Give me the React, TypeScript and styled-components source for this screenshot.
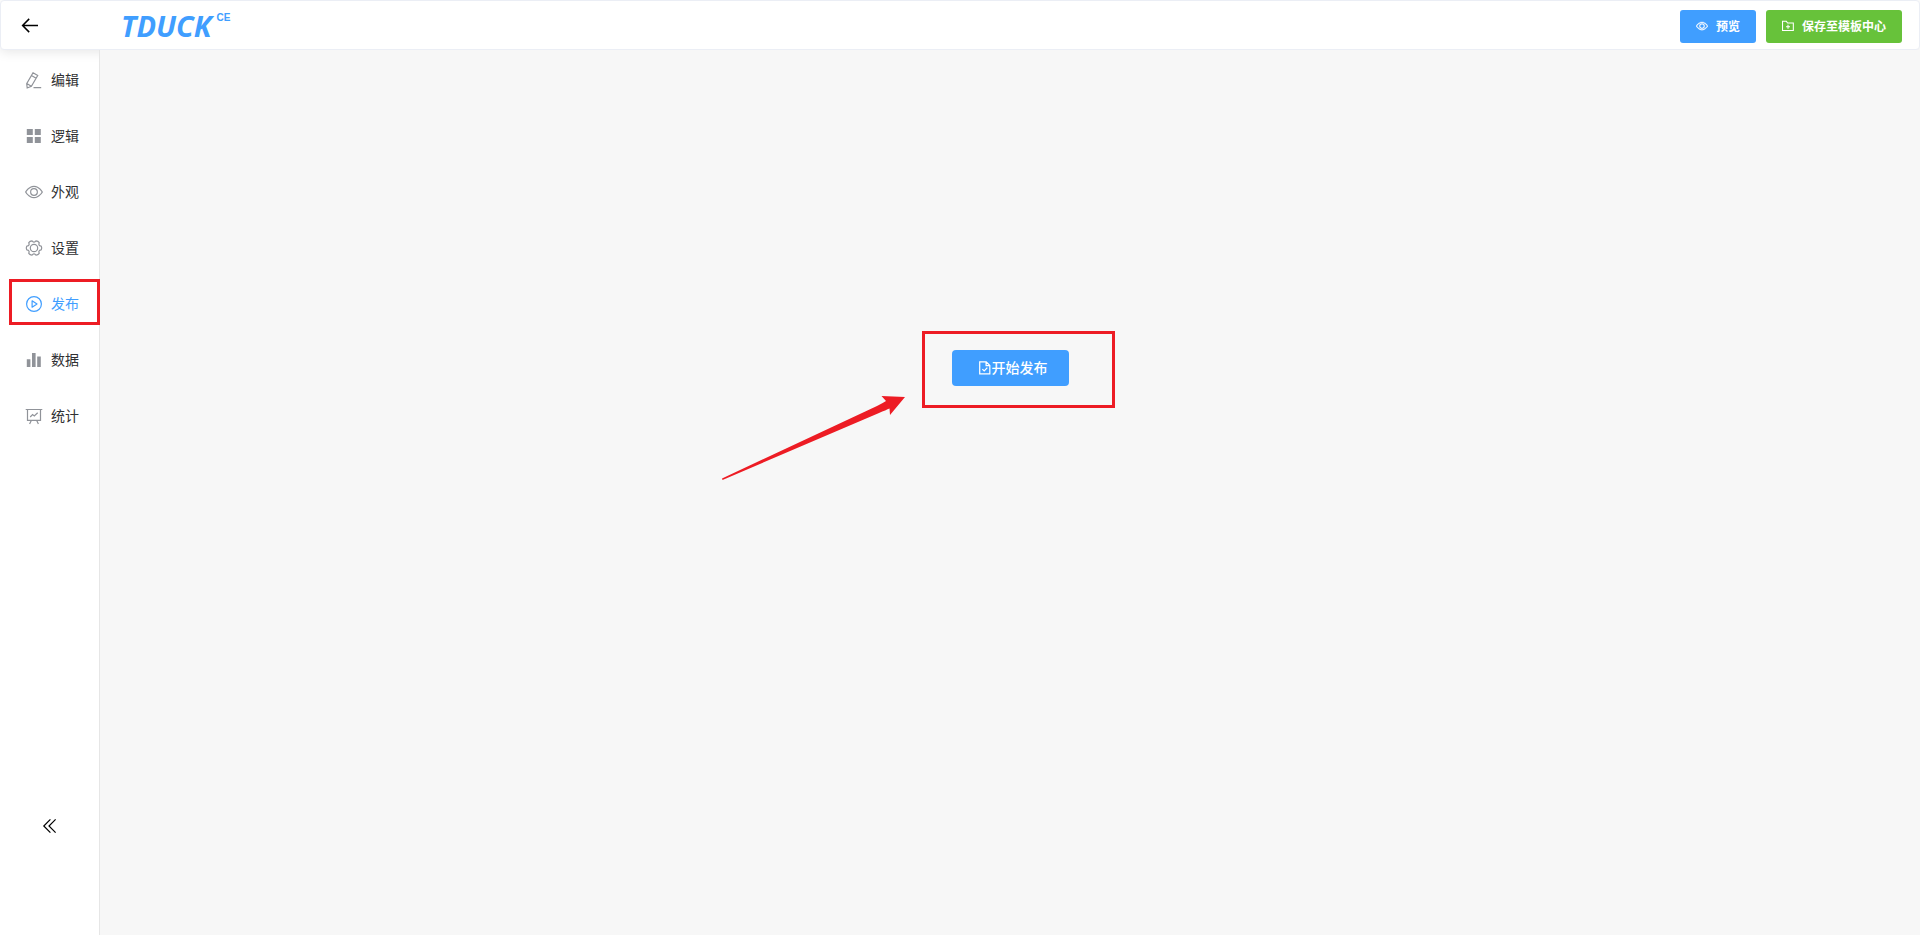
import React from "react";
import styled, { createGlobalStyle } from "styled-components";

const GlobalStyle = createGlobalStyle`
  * { box-sizing: border-box; }
  body {
    margin: 0;
    background: #fff;
    color: #303133;
    font-family: "Liberation Sans", "Noto Sans CJK SC", sans-serif;
    font-size: 14px;
  }
`;

const Page = styled.div`
  display: flex;
  flex-direction: column;
  min-height: calc(100vh - 10px);
`;

const Header = styled.header`
  display: flex;
  align-items: center;
  height: 50px;
  padding: 2px 17px 0 20px;
  background: #fff;
  border: 1px solid #ebeef5;
  border-radius: 4px;
  box-shadow: 0 2px 12px rgba(0, 0, 0, 0.1);
`;

const IconButton = styled.button`
  display: flex;
  padding: 0;
  border: 0;
  background: none;
  color: #000;
  cursor: pointer;
`;

const Logo = styled.a`
  display: flex;
  align-items: flex-start;
  gap: 5px;
  margin-left: 82px;
  color: #409eff;
  text-decoration: none;
  font: italic 700 29px/34px "Open Sans", "Noto Sans", sans-serif;
`;

const Edition = styled.sup`
  font: 700 10px/18px "Liberation Sans", sans-serif;
`;

const HeaderActions = styled.div`
  display: flex;
  gap: 10px;
  margin-left: auto;
`;

const Button = styled.button<{ $tone: string }>`
  display: flex;
  align-items: center;
  gap: 8px;
  height: 33px;
  padding: 0 16px;
  border: 0;
  border-radius: 3px;
  background: ${(p) => p.$tone};
  color: #fff;
  font: inherit;
  font-size: 12px;
  font-weight: 700;
  cursor: pointer;
`;

const PublishButton = styled(Button)`
  gap: 0;
  height: 36px;
  padding: 0 21px 0 26px;
  border-radius: 4px;
  font-size: 14px;
  font-weight: 500;
`;

const Label = styled.span`
  padding-bottom: 2px;
`;

const Body = styled.div`
  display: flex;
  flex: 1;
`;

const Sidebar = styled.aside`
  display: flex;
  flex-direction: column;
  justify-content: space-between;
  align-items: center;
  width: 100px;
  padding: 2px 0 101px;
  border-right: 1px solid #e6e6e6;
`;

const Menu = styled.nav`
  align-self: stretch;
`;

const MenuItem = styled.a<{ $active?: boolean }>`
  position: relative;
  display: flex;
  align-items: center;
  gap: 8px;
  height: 56px;
  padding-left: 25px;
  color: ${(p) => (p.$active ? "#409eff" : "#303133")};
  text-decoration: none;

  svg {
    color: ${(p) => (p.$active ? "#409eff" : "#909399")};
  }
`;

const ItemHighlight = styled.span`
  position: absolute;
  inset: 3px -1px 7px 9px;
  border: 3px solid #ed1c24;
`;

const Main = styled.main`
  position: relative;
  flex: 1;
  display: flex;
  justify-content: center;
  align-items: flex-start;
  padding-top: 300px;
  background: #f7f7f7;
`;

const PublishArea = styled.div`
  position: relative;
`;

const PublishHighlight = styled.span`
  position: absolute;
  inset: -19px -46px -22px -30px;
  border: 3px solid #ed1c24;
  pointer-events: none;
`;

const Arrow = styled.svg`
  position: absolute;
  top: 45px;
  left: -231px;
`;

type IconProps = { size?: number; children: React.ReactNode };

const Icon = ({ size = 18, children }: IconProps) => (
  <svg
    width={size}
    height={size}
    viewBox="0 0 18 18"
    fill="none"
    stroke="currentColor"
    strokeWidth="1.2"
    aria-hidden="true"
  >
    {children}
  </svg>
);

const EyeIcon = ({ size = 18, weight = 0 }: { size?: number; weight?: number }) => (
  <svg
    width={size}
    height={size}
    viewBox="0 0 1024 1024"
    fill="currentColor"
    stroke="currentColor"
    strokeWidth={weight}
    aria-hidden="true"
  >
    <path d="M512 160c320 0 512 352 512 352S832 864 512 864 0 512 0 512s192-352 512-352zm0 64c-225.28 0-384.128 208.064-436.8 288 52.608 79.872 211.456 288 436.8 288 225.28 0 384.128-208.064 436.8-288-52.608-79.872-211.456-288-436.8-288zm0 64a224 224 0 1 1 0 448 224 224 0 0 1 0-448zm0 64a160.192 160.192 0 0 0-160 160c0 88.192 71.744 160 160 160s160-71.808 160-160-71.744-160-160-160z" />
  </svg>
);

const EditIcon = () => (
  <Icon>
    <path d="M8 1.8 12.7 4.5 6.4 15.3 2.2 17 1.7 12.6ZM6.5 4.5 11.1 7.2M1.8 12.6 6.3 15.2M8.5 16.6H16.2" />
  </Icon>
);

const GridIcon = () => (
  <Icon>
    <path
      d="M1.8 2h6v6h-6zM9.8 2h6v6h-6zM1.8 10h6v6h-6zM9.8 10h6v6h-6z"
      fill="currentColor"
      stroke="none"
    />
  </Icon>
);

/* Six rounded lobes spaced evenly round the hub. */
const polar = (radius: number, degrees: number) => {
  const a = (degrees * Math.PI) / 180;
  return `${(9 + radius * Math.cos(a)).toFixed(2)} ${(9 + radius * Math.sin(a)).toFixed(2)}`;
};
const gearPath =
  [0, 60, 120, 180, 240, 300]
    .map(
      (a, i) =>
        `${i ? "L" : "M"}${polar(7.5, a - 14)}Q${polar(8.2, a)} ${polar(7.5, a + 14)}L${polar(6.1, a + 23)}Q${polar(5.8, a + 30)} ${polar(6.1, a + 37)}`
    )
    .join("") + "Z";

const GearIcon = () => (
  <Icon>
    <path d={gearPath} />
    <circle cx="9" cy="9" r="3.7" />
  </Icon>
);

const PlayIcon = () => (
  <Icon>
    <circle cx="9" cy="9" r="7.4" />
    <path d="M7.1 5.8 12 9 7.1 12.2Z" strokeLinejoin="round" />
  </Icon>
);

const BarsIcon = () => (
  <Icon>
    <path
      d="M1.8 8.2h3.6V16H1.8zM7 2h3.6v14H7zM12.2 5.4h3.6V16h-3.6z"
      fill="currentColor"
      stroke="none"
    />
  </Icon>
);

const BoardIcon = () => (
  <Icon>
    <path d="M.7 2.5H17.3M2.5 2.5V13.3H15.5V2.5M6.3 13.5 4.6 17M11.7 13.5 13.4 17M5.2 10 7.6 7.6 9.3 9 12.7 5.8" />
  </Icon>
);

const FolderAddIcon = () => (
  <Icon size={12}>
    <path d="M.8 2H6.5L8.5 4.5H17V15.8H.8ZM9 7.2V13.2M6 10.2H12" strokeWidth="1.6" />
  </Icon>
);

const DocumentCheckedIcon = () => (
  <Icon size={14}>
    <path d="M2.2 1.2H10.6L15.2 5.8V16.6H2.2ZM10.4 1.4V6H15M5.6 10.4 8 12.8 12 8.6" strokeWidth="1.6" />
  </Icon>
);

const items = [
  { label: "编辑", icon: <EditIcon /> },
  { label: "逻辑", icon: <GridIcon /> },
  { label: "外观", icon: <EyeIcon /> },
  { label: "设置", icon: <GearIcon /> },
  { label: "发布", icon: <PlayIcon />, active: true },
  { label: "数据", icon: <BarsIcon /> },
  { label: "统计", icon: <BoardIcon /> },
];

export default function App() {
  return (
    <>
      <GlobalStyle />
      <Page>
        <Header>
          <IconButton type="button" aria-label="返回">
            <svg width="18" height="18" viewBox="0 0 18 18" fill="none" stroke="currentColor" strokeWidth="1.5">
              <path d="M17 8.5H1.8M8.2 1.9 1.6 8.5 8.2 15.1" />
            </svg>
          </IconButton>
          <Logo href="#">
            TDUCK<Edition>CE</Edition>
          </Logo>
          <HeaderActions>
            <Button type="button" $tone="#409eff">
              <EyeIcon size={12} weight={24} />
              <Label>预览</Label>
            </Button>
            <Button type="button" $tone="#67c23a">
              <FolderAddIcon />
              <Label>保存至模板中心</Label>
            </Button>
          </HeaderActions>
        </Header>
        <Body>
          <Sidebar>
            <Menu>
              {items.map((item) => (
                <MenuItem key={item.label} href="#" $active={item.active}>
                  {item.icon}
                  <Label>{item.label}</Label>
                  {item.active && <ItemHighlight />}
                </MenuItem>
              ))}
            </Menu>
            <IconButton type="button" aria-label="收起">
              <svg width="16" height="16" viewBox="0 0 16 16" fill="none" stroke="currentColor" strokeWidth="1.2">
                <path d="M8.4 1.4 1.8 8 8.4 14.6M13.6 1.4 7 8 13.6 14.6" />
              </svg>
            </IconButton>
          </Sidebar>
          <Main>
            <PublishArea>
              <PublishButton type="button" $tone="#409eff">
                <DocumentCheckedIcon />
                <Label>开始发布</Label>
              </PublishButton>
              <PublishHighlight />
              <Arrow width="186" height="86" viewBox="0 0 186 86" fill="#ed1c24" aria-hidden="true">
                <path d="M184 2 160.5 1 165 6 Q162 8 156 11 L1 83.5 1.5 85 158 18 Q165 15 168.5 13.5 L169 20Z" />
              </Arrow>
            </PublishArea>
          </Main>
        </Body>
      </Page>
    </>
  );
}
